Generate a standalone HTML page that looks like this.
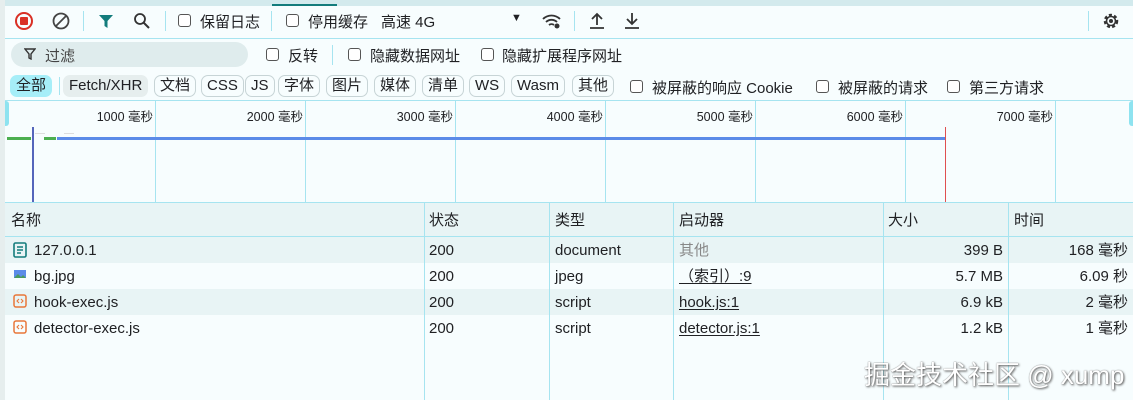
<!DOCTYPE html>
<html><head><meta charset="utf-8">
<style>
*{box-sizing:border-box;margin:0;padding:0}
body{width:1133px;height:400px;overflow:hidden;background:#f7fdfe;font-family:"Liberation Sans","Noto Sans CJK SC",sans-serif;font-size:15px;color:#202124;position:relative}
.a{position:absolute;white-space:nowrap}
.cb{position:absolute;width:13px;height:13px;border:1px solid #555;border-radius:3px;background:#fff}
.sep{position:absolute;width:1px;background:#a6e4f0}
.chip{position:absolute;top:75px;height:22px;border:1px solid #c7d4d6;border-radius:7px;padding:0 5px;line-height:20px;font-size:15px;background:#f7fdfe}
.gl{position:absolute;top:101px;height:101px;width:1px;background:#a6e4f0}
.tl{position:absolute;top:106px;font-size:12.5px;text-align:right;width:140px}
.row{position:absolute;left:5px;right:0;height:26px}
.cl{position:absolute;top:203px;bottom:0;width:1px;background:#a6e4f0}
.t{position:absolute;line-height:26px;font-size:15px}
u{text-underline-offset:2px}
</style></head><body>
<div class="a" style="left:0;top:0;width:1133px;height:6px;background:#d3eaed"></div>
<div class="a" style="left:272px;top:4px;width:65px;height:2px;background:#137c7c"></div>
<div class="a" style="left:0;top:0;width:5px;height:400px;background:#e6eeee"></div>
<div class="a" style="left:5px;top:38px;width:1128px;height:1px;background:#a6e4f0"></div>
<!-- toolbar -->
<svg class="a" style="left:14px;top:11px" width="20" height="20"><circle cx="10" cy="10" r="8" fill="none" stroke="#d93025" stroke-width="2"/><rect x="6" y="6" width="8" height="8" rx="1" fill="#d93025"/></svg>
<svg class="a" style="left:51px;top:11px" width="20" height="20"><circle cx="10" cy="10" r="7.5" fill="none" stroke="#444" stroke-width="1.8"/><line x1="5" y1="15" x2="15" y2="5" stroke="#444" stroke-width="1.8"/></svg>
<div class="sep" style="left:83px;top:11px;height:20px"></div>
<svg class="a" style="left:97px;top:12px" width="18" height="18"><path d="M2 3h14l-5.5 6v7l-3-2v-5z" fill="#137c7c"/></svg>
<svg class="a" style="left:132px;top:11px" width="20" height="20"><circle cx="8" cy="8" r="5" fill="none" stroke="#333" stroke-width="1.8"/><line x1="11.5" y1="11.5" x2="17" y2="17" stroke="#333" stroke-width="2"/></svg>
<div class="sep" style="left:165px;top:11px;height:20px"></div>
<div class="cb" style="left:178px;top:14px"></div><div class="a" style="left:200px;top:11px">保留日志</div>
<div class="sep" style="left:271px;top:11px;height:20px"></div>
<div class="cb" style="left:286px;top:14px"></div><div class="a" style="left:308px;top:11px">停用缓存</div>
<div class="a" style="left:381px;top:11px">高速 4G</div>
<div class="a" style="left:511px;top:12px;font-size:11px">▼</div>
<svg class="a" style="left:541px;top:11px" width="22" height="20"><path d="M2 8a12 12 0 0 1 17 0M5 11a8 8 0 0 1 11 0M8 14a4 4 0 0 1 5 0" fill="none" stroke="#333" stroke-width="1.8"/><circle cx="16" cy="15" r="2.5" fill="#333"/></svg>
<div class="sep" style="left:574px;top:11px;height:20px"></div>
<svg class="a" style="left:588px;top:11px" width="18" height="20"><path d="M9 14V3M4 8l5-5 5 5M2 17h14" fill="none" stroke="#333" stroke-width="1.8"/></svg>
<svg class="a" style="left:623px;top:11px" width="18" height="20"><path d="M9 2v11M4 8l5 5 5-5M2 17h14" fill="none" stroke="#333" stroke-width="1.8"/></svg>
<div class="sep" style="left:1088px;top:11px;height:20px"></div>
<svg class="a" style="left:1101px;top:11px" width="20" height="20"><circle cx="10" cy="10" r="6" fill="none" stroke="#333" stroke-width="2.5" stroke-dasharray="3 2.2"/><circle cx="10" cy="10" r="4.5" fill="none" stroke="#333" stroke-width="1.6"/><circle cx="10" cy="10" r="2" fill="#333"/></svg>
<!-- filter row -->
<div class="a" style="left:11px;top:42px;width:237px;height:25px;border-radius:13px;background:#dfeced"></div>
<svg class="a" style="left:24px;top:48px" width="12" height="12"><path d="M1 1h10l-4 5v5l-2-1V6z" fill="none" stroke="#333" stroke-width="1.4"/></svg>
<div class="a" style="left:45px;top:45px;color:#444">过滤</div>
<div class="cb" style="left:266px;top:48px"></div><div class="a" style="left:288px;top:45px">反转</div>
<div class="sep" style="left:332px;top:45px;height:20px"></div>
<div class="cb" style="left:348px;top:48px"></div><div class="a" style="left:370px;top:45px">隐藏数据网址</div>
<div class="cb" style="left:481px;top:48px"></div><div class="a" style="left:502px;top:45px">隐藏扩展程序网址</div>
<!-- types -->
<div class="chip" style="left:10px;border-color:#a6eef8;background:#a6eef8">全部</div>
<div class="sep" style="left:59px;top:77px;height:18px"></div>
<div class="chip" style="left:63px;background:#e6eeee;border-color:#e6eeee">Fetch/XHR</div>
<div class="chip" style="left:154px">文档</div>
<div class="chip" style="left:201px">CSS</div>
<div class="chip" style="left:245px">JS</div>
<div class="chip" style="left:278px">字体</div>
<div class="chip" style="left:326px">图片</div>
<div class="chip" style="left:374px">媒体</div>
<div class="chip" style="left:422px">清单</div>
<div class="chip" style="left:469px">WS</div>
<div class="chip" style="left:511px">Wasm</div>
<div class="chip" style="left:572px">其他</div>
<div class="cb" style="left:630px;top:80px"></div><div class="a" style="left:652px;top:77px">被屏蔽的响应 Cookie</div>
<div class="cb" style="left:816px;top:80px"></div><div class="a" style="left:838px;top:77px">被屏蔽的请求</div>
<div class="cb" style="left:947px;top:80px"></div><div class="a" style="left:969px;top:77px">第三方请求</div>
<!-- timeline -->
<div class="a" style="left:5px;top:100px;width:1128px;height:1px;background:#a6e4f0"></div>
<div class="a" style="left:5px;top:101px;width:4px;height:25px;background:#8ee3f0;border-radius:0 3px 3px 0"></div>
<div class="a" style="left:1129px;top:101px;width:4px;height:25px;background:#8ee3f0;border-radius:3px 0 0 3px"></div>
<div class="gl" style="left:155px"></div><div class="gl" style="left:305px"></div><div class="gl" style="left:455px"></div><div class="gl" style="left:605px"></div><div class="gl" style="left:755px"></div><div class="gl" style="left:905px"></div><div class="gl" style="left:1055px"></div>
<div class="tl" style="left:13px">1000 毫秒</div><div class="tl" style="left:163px">2000 毫秒</div><div class="tl" style="left:313px">3000 毫秒</div><div class="tl" style="left:463px">4000 毫秒</div><div class="tl" style="left:613px">5000 毫秒</div><div class="tl" style="left:763px">6000 毫秒</div><div class="tl" style="left:913px">7000 毫秒</div>
<div class="a" style="left:7px;top:137px;width:24px;height:3px;background:#4caf50"></div>
<div class="a" style="left:44px;top:137px;width:12px;height:3px;background:#4caf50"></div>
<div class="a" style="left:35px;top:133px;width:10px;height:1px;background:#ddd"></div>
<div class="a" style="left:64px;top:133px;width:10px;height:1px;background:#ddd"></div>
<div class="a" style="left:57px;top:137px;width:888px;height:3px;background:#5b8be8"></div>
<div class="a" style="left:32px;top:127px;width:2px;height:75px;background:#5566bb"></div>
<div class="a" style="left:945px;top:127px;width:1px;height:75px;background:#e05050"></div>
<!-- table -->
<div class="a" style="left:5px;top:202px;width:1128px;height:1px;background:#a6e4f0"></div>
<div class="a" style="left:5px;top:203px;width:1128px;height:33px;background:#e8f4f5"></div>
<div class="a" style="left:5px;top:236px;width:1128px;height:1px;background:#a6e4f0"></div>
<div class="row" style="top:237px;background:#e8f4f5"></div>
<div class="row" style="top:289px;background:#e8f4f5"></div>
<div class="cl" style="left:424px"></div><div class="cl" style="left:549px"></div><div class="cl" style="left:673px"></div><div class="cl" style="left:883px"></div><div class="cl" style="left:1008px"></div>
<div class="a" style="left:11px;top:209px">名称</div><div class="a" style="left:429px;top:209px">状态</div><div class="a" style="left:555px;top:209px">类型</div><div class="a" style="left:679px;top:209px">启动器</div><div class="a" style="left:888px;top:209px">大小</div><div class="a" style="left:1014px;top:209px">时间</div>

<svg class="a" style="left:13px;top:242px" width="14" height="16"><rect x="1" y="1" width="12" height="14" rx="1.5" fill="none" stroke="#137c7c" stroke-width="1.6"/><path d="M4 5h6M4 8h6M4 11h4" stroke="#137c7c" stroke-width="1.4"/></svg>
<svg class="a" style="left:14px;top:270px" width="12" height="8"><rect width="12" height="8" fill="#5b8be8"/><path d="M0 8l4-4 3 3 2-2 3 3z" fill="#4a9a60"/></svg>
<svg class="a" style="left:13px;top:294px" width="14" height="14"><rect x="1" y="1" width="12" height="12" rx="2" fill="none" stroke="#e8773a" stroke-width="1.5"/><path d="M6 5l-2 2 2 2M8 5l2 2-2 2" fill="none" stroke="#e8773a" stroke-width="1.1"/></svg>
<svg class="a" style="left:13px;top:320px" width="14" height="14"><rect x="1" y="1" width="12" height="12" rx="2" fill="none" stroke="#e8773a" stroke-width="1.5"/><path d="M6 5l-2 2 2 2M8 5l2 2-2 2" fill="none" stroke="#e8773a" stroke-width="1.1"/></svg>

<div class="t" style="left:34px;top:238px">127.0.0.1</div><div class="t" style="left:429px;top:238px">200</div><div class="t" style="left:555px;top:238px">document</div><div class="t" style="left:679px;top:238px;color:#888">其他</div><div class="t" style="left:883px;width:120px;text-align:right;top:238px">399 B</div><div class="t" style="left:1008px;width:120px;text-align:right;top:238px">168 毫秒</div>
<div class="t" style="left:34px;top:264px">bg.jpg</div><div class="t" style="left:429px;top:264px">200</div><div class="t" style="left:555px;top:264px">jpeg</div><div class="t" style="left:679px;top:264px"><u>（索引）:9</u></div><div class="t" style="left:883px;width:120px;text-align:right;top:264px">5.7 MB</div><div class="t" style="left:1008px;width:120px;text-align:right;top:264px">6.09 秒</div>
<div class="t" style="left:34px;top:290px">hook-exec.js</div><div class="t" style="left:429px;top:290px">200</div><div class="t" style="left:555px;top:290px">script</div><div class="t" style="left:679px;top:290px"><u>hook.js:1</u></div><div class="t" style="left:883px;width:120px;text-align:right;top:290px">6.9 kB</div><div class="t" style="left:1008px;width:120px;text-align:right;top:290px">2 毫秒</div>
<div class="t" style="left:34px;top:316px">detector-exec.js</div><div class="t" style="left:429px;top:316px">200</div><div class="t" style="left:555px;top:316px">script</div><div class="t" style="left:679px;top:316px"><u>detector.js:1</u></div><div class="t" style="left:883px;width:120px;text-align:right;top:316px">1.2 kB</div><div class="t" style="left:1008px;width:120px;text-align:right;top:316px">1 毫秒</div>

<div class="a" style="left:864px;top:355px;font-size:26px;color:#fff;text-shadow:1px 1px 2px #555,0 0 1px #666">掘金技术社区 @ xump</div>
</body></html>
